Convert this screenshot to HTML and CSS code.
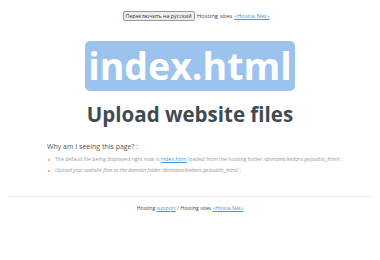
FILE: index.html
```html
<!DOCTYPE html>
<html>
<head>
<meta charset="utf-8">
<link rel="stylesheet" href="styles.css">
</head>
<body>
<div class="top">
  <button class="switch">Переключить на русский</button>
  <span>Hosting sites <a href="#">«Hostia.Net»</a></span>
</div>
<div class="hero">
  <div class="badge">index.html</div>
  <h1 class="title">Upload website files</h1>
</div>
<div class="info">
  <div class="why">Why am I seeing this page? :</div>
  <ul class="list">
    <li>The default file being displayed right now is <a href="#">index.html</a> loaded from the hosting folder <i>/domains/kedaro.ge/public_html/</i> ;</li>
    <li><i>Upload your website files to the domain folder /domains/kedaro.ge/public_html/</i> ;</li>
  </ul>
</div>
<hr class="sep">
<div class="footer">Hosting <a href="#">support</a> / Hosting sites <a href="#">«Hostia.Net»</a></div>
</body>
</html>
```
FILE: styles.css
```css
html, body { margin: 0; padding: 0; background: #fff; }
body { font-family: "Open Sans", sans-serif; color: #444; }
a { color: #3a9be0; }
.top { display: flex; justify-content: center; align-items: center; gap: 2px; padding: 11px 0 0 12px; font-size: 6px; color: #444; }
.switch { font-family: "Open Sans", sans-serif; font-size: 5.4px; padding: 0 2px; margin: 0; border: 1px solid #999; border-radius: 2px; background: #efefef; color: #333; height: 10px; line-height: 7px; }
.hero { display: flex; flex-direction: column; align-items: center; margin-top: 20px; }
.badge { background: #9cc3ee; color: #fff; font-weight: 700; font-size: 37.5px; line-height: 50px; border-radius: 5px; width: 210px; text-align: center; }
.title { margin: 8px 0 0; font-size: 20.5px; font-weight: 700; color: #3f4b50; line-height: 30px; }
.info { padding: 0 20px 0 47px; margin-top: 13px; }
.why { font-size: 7px; color: #555; }
.list { list-style: none; margin: 3px 0 0; padding: 0 0 0 1px; font-size: 5.2px; color: #999; }
.list li { position: relative; padding-left: 7px; line-height: 11px; white-space: nowrap; }
.list li::before { content: ""; position: absolute; left: 0; top: 5px; width: 2px; height: 2px; background: #f0a030; border-radius: 1px; }
.sep { border: 0; border-top: 1px solid #eee; margin: 20px 8px 0; }
.footer { text-align: center; font-size: 5.2px; color: #444; margin-top: 7px; }
```
